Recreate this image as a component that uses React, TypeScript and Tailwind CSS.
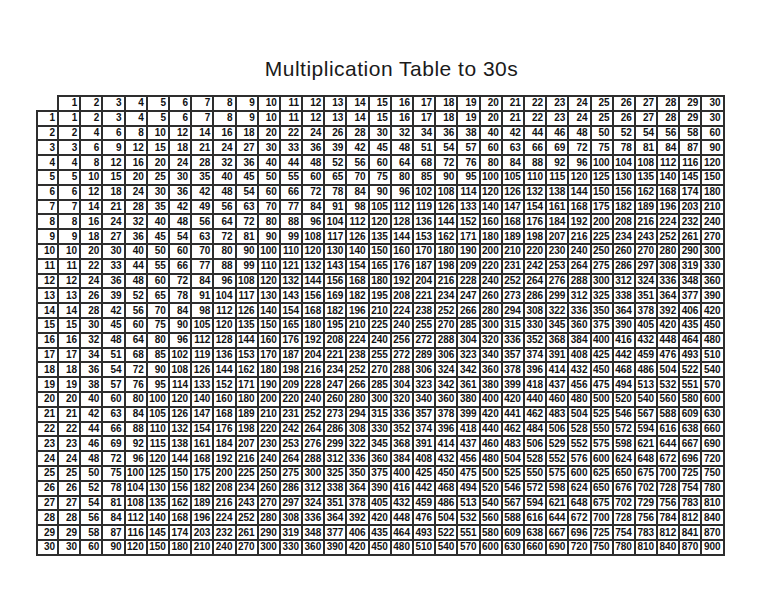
const nums = Array.from({ length: 30 }, (_, i) => i + 1);

export default function App() {
  return (
    <div className="min-h-[594px] w-[768px] bg-white font-['Liberation_Sans',Arial,sans-serif] text-[#111]">
      {/* Title */}
      <div className="pt-[57px] pl-[15px] text-center">
        <h1 className="text-[21px] leading-[24px] font-normal tracking-[0.5px] text-[#1a1a1a]">
          Multiplication Table to 30s
        </h1>
      </div>

      {/* Table */}
      <div className="mt-[14px] pl-[36px]">
        <table className="table-fixed border-collapse text-[10px] font-bold leading-none">
          <colgroup>
            <col className="w-[21px]" />
            {nums.map((n) => (
              <col key={n} className="w-[22.2px]" />
            ))}
          </colgroup>
          <tbody>
            <tr className="h-[14.8px]">
              <td className="border-0 p-0" />
              {nums.map((n) => (
                <td key={n} className="border-2 border-[#2e2e2e] p-0 pr-[2px] text-right">
                  {n}
                </td>
              ))}
            </tr>
            {nums.map((r) => (
              <tr key={r} className="h-[14.8px]">
                <td className="border-2 border-[#2e2e2e] p-0 pr-[2px] text-right">{r}</td>
                {nums.map((c) => (
                  <td key={c} className="border-2 border-[#2e2e2e] p-0 pr-[2px] text-right">
                    {r * c}
                  </td>
                ))}
              </tr>
            ))}
          </tbody>
        </table>
      </div>
    </div>
  );
}
